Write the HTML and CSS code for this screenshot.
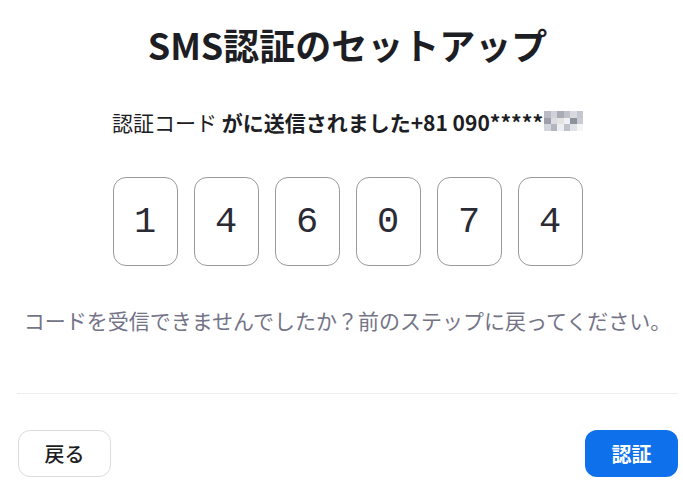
FILE: index.html
```html
<!DOCTYPE html>
<html lang="ja">
<head>
<meta charset="utf-8">
<title>SMS認証のセットアップ</title>
<link rel="stylesheet" href="styles.css">
</head>
<body>
<div class="dialog">
  <h1 class="title">SMS認証のセットアップ</h1>
  <p class="sent"><span class="sent-lead">認証コード </span><span class="sent-strong">がに送信されました+81 090*****</span><span class="mosaic" aria-hidden="true"><i></i><i></i><i></i><i></i><i></i><i></i><i></i><i></i><i></i><i></i><i></i><i></i><i></i><i></i><i></i><i></i><i></i><i></i></span></p>
  <div class="code">
    <div class="digit">1</div>
    <div class="digit">4</div>
    <div class="digit">6</div>
    <div class="digit">0</div>
    <div class="digit">7</div>
    <div class="digit">4</div>
  </div>
  <p class="help">コードを受信できませんでしたか？前のステップに戻ってください。</p>
  <div class="footer">
    <button class="btn btn-back">戻る</button>
    <button class="btn btn-verify">認証</button>
  </div>
</div>
</body>
</html>
```
FILE: styles.css
```css
html, body {
  margin: 0;
  padding: 0;
  background: #ffffff;
}
body {
  font-family: "Noto Sans CJK JP", "Noto Sans", sans-serif;
  color: #232333;
}
.dialog {
  width: 683px;
  box-sizing: border-box;
  padding: 20px 5px 0 17px;
  display: flex;
  flex-direction: column;
  align-items: center;
}
.title {
  margin: 0;
  font-size: 36px;
  line-height: 48px;
  font-weight: 700;
  color: #1d1d24;
}
.sent {
  margin: 40px 0 0;
  font-size: 21px;
  line-height: 28px;
  display: flex;
  align-items: center;
  color: #1d1d24;
}
.sent-lead {
  font-weight: 400;
  white-space: pre;
}
.sent-strong {
  font-weight: 700;
}
.mosaic {
  display: grid;
  grid-template-columns: repeat(6, 6.5px);
  grid-template-rows: repeat(3, 6.5px);
  margin-left: 1px;
  margin-top: -2px;
}
.mosaic i { background: #c9ccd4; }
.mosaic i:nth-child(1) { background: #b9bcc6; }
.mosaic i:nth-child(2) { background: #cfd2d9; }
.mosaic i:nth-child(3) { background: #a9abb5; }
.mosaic i:nth-child(4) { background: #bfc2ca; }
.mosaic i:nth-child(5) { background: #d8dae0; }
.mosaic i:nth-child(6) { background: #c4c7cf; }
.mosaic i:nth-child(7) { background: #9d9fab; }
.mosaic i:nth-child(8) { background: #dcdde3; }
.mosaic i:nth-child(9) { background: #e4e3e2; }
.mosaic i:nth-child(10) { background: #f0f1f4; }
.mosaic i:nth-child(11) { background: #8f919d; }
.mosaic i:nth-child(12) { background: #c8cbd2; }
.mosaic i:nth-child(13) { background: #d3d5dc; }
.mosaic i:nth-child(14) { background: #b3b5bf; }
.mosaic i:nth-child(15) { background: #eceef1; }
.mosaic i:nth-child(16) { background: #c0c2cb; }
.mosaic i:nth-child(17) { background: #e0e2e7; }
.mosaic i:nth-child(18) { background: #f4f5f7; }
.code {
  margin-top: 41px;
  display: flex;
  gap: 16px;
}
.digit {
  width: 65px;
  height: 89px;
  box-sizing: border-box;
  border: 1px solid #9a9a9a;
  border-radius: 13px;
  display: flex;
  align-items: center;
  justify-content: center;
  font-family: "Liberation Mono", monospace;
  font-size: 37px;
  color: #2b2b36;
}
.help {
  margin: 39px 0 0;
  font-size: 21px;
  line-height: 30px;
  color: #747487;
}
.footer {
  align-self: stretch;
  margin-top: 58px;
  border-top: 1px solid #ededed;
  padding-top: 36px;
  display: flex;
  justify-content: space-between;
}
.btn {
  width: 93px;
  height: 47px;
  box-sizing: border-box;
  border-radius: 12px;
  font-family: "Noto Sans CJK JP", sans-serif;
  font-size: 20px;
  padding: 0;
}
.btn-back {
  margin-left: 1px;
  background: #ffffff;
  border: 1px solid #dcdcdc;
  color: #1d1d24;
  font-weight: 500;
}
.btn-verify {
  background: #0e71eb;
  border: none;
  color: #ffffff;
  font-weight: 700;
}
```
